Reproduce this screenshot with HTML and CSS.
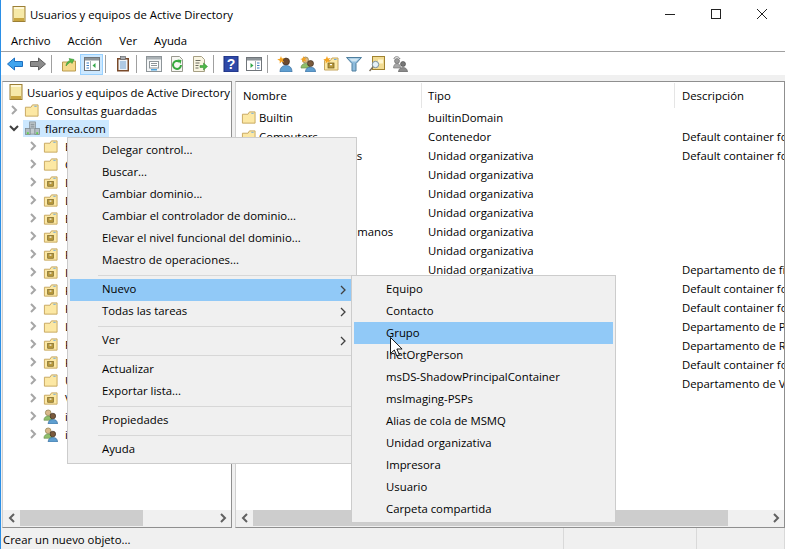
FILE: index.html
```html
<!DOCTYPE html>
<html lang="es">
<head>
    <meta charset="UTF-8">
    <title>Usuarios y equipos de Active Directory</title>
    <link rel="stylesheet" href="styles.css">
</head>
<body>
    <svg class="defs" width="0" height="0">
        <symbol id="mmc" viewBox="0 0 16 16">
            <rect x="2" y="0.5" width="12" height="15" fill="#f6e9a8" stroke="#9c7f35"/>
            <rect x="3" y="1" width="10" height="2" fill="#fff8d8"/>
            <rect x="3" y="12" width="10" height="3" fill="#c9a640"/>
        </symbol>
        <symbol id="folder" viewBox="0 0 16 16">
            <path d="M1.5 4.5v9.5h13.5v-12h-6l-1.5 2.5z" fill="#fce8a4" stroke="#c6a65e"/>
            <rect x="11" y="3" width="2.5" height="1" fill="#6aa8e0"/>
        </symbol>
        <symbol id="ou" viewBox="0 0 16 16">
            <path d="M1.5 4.5v9.5h13.5v-12h-6l-1.5 2.5z" fill="#fce8a4" stroke="#c6a65e"/>
            <rect x="11" y="3" width="2.5" height="1" fill="#6aa8e0"/>
            <rect x="5" y="7" width="6" height="5" fill="#b8993c" stroke="#6e5a1e" stroke-width="0.7"/>
            <rect x="7" y="8" width="2" height="1.2" fill="#fff"/>
        </symbol>
        <symbol id="people" viewBox="0 0 16 16">
            <circle cx="5.5" cy="4" r="3" fill="#d9b98c" stroke="#8a7a45" stroke-width="0.7"/>
            <path d="M1 12c0-3 2-4.500 4.500-4.500s4.500 1.500 4.500 4.500z" fill="#8fbf6a" stroke="#6b8f50" stroke-width="0.7"/>
            <circle cx="10.500" cy="7.500" r="3" fill="#7a5a3c" stroke="#3c2c1e" stroke-width="0.7"/>
            <path d="M5.500 16c0-3.500 2-4.800 5-4.800s5 1.300 5 4.800z" fill="#5f9fd0" stroke="#3f6f9c" stroke-width="0.7"/>
        </symbol>
        <symbol id="domain" viewBox="0 0 16 16">
            <rect x="5" y="1" width="6" height="13" fill="#c4ccd0" stroke="#7b868c" stroke-width="0.8"/>
            <path d="M6 3.500h4M6 5.500h4M6 7.500h4" stroke="#6d787e" stroke-width="0.8"/>
            <rect x="0.500" y="8" width="5" height="6.500" fill="#b4bec4" stroke="#7b868c" stroke-width="0.8"/>
            <rect x="10.500" y="8" width="5" height="6.500" fill="#b4bec4" stroke="#7b868c" stroke-width="0.8"/>
            <rect x="2" y="12" width="2" height="2" fill="#5ed04c"/>
            <rect x="12" y="12" width="2" height="2" fill="#5ed04c"/>
        </symbol>
        <symbol id="star" viewBox="0 0 8 8">
            <path d="M4 0l.9 2.600 2.800-.7-1.900 2.100 1.400 2.600-2.500-1.100-2 2 .1-2.800-2.600-1.300 2.700-.6z" fill="#f6a31e"/>
        </symbol>
    </svg>

    <div class="win">
        <header class="titlebar">
            <svg class="title-icon"><use href="#mmc"/></svg>
            <span class="title-text">Usuarios y equipos de Active Directory</span>
            <div class="controls">
                <svg width="12" height="12" viewBox="0 0 12 12"><path d="M1 6.500h10" stroke="#222"/></svg>
                <svg width="12" height="12" viewBox="0 0 12 12"><rect x="1.500" y="1.500" width="9" height="9" fill="none" stroke="#222"/></svg>
                <svg width="12" height="12" viewBox="0 0 12 12"><path d="M1 1l10 10M11 1l-10 10" stroke="#222"/></svg>
            </div>
        </header>

        <nav class="menubar">
            <span>Archivo</span>
            <span>Acción</span>
            <span>Ver</span>
            <span>Ayuda</span>
        </nav>

        <div class="toolbar">
            <button class="tool"><svg viewBox="0 0 16 16"><path d="M0.500 8l7-6v3.500h8v5h-8v3.500z" fill="#3fa4ee" stroke="#1d6fc0"/></svg></button>
            <button class="tool"><svg viewBox="0 0 16 16"><path d="M15.500 8l-7-6v3.500h-8v5h8v3.500z" fill="#8c8c8c" stroke="#5e5e5e"/></svg></button>
            <i class="tool-sep"></i>
            <button class="tool"><svg viewBox="0 0 16 16"><path d="M1.500 6v9h13v-10h-5l-1 1z" fill="#f5d98c" stroke="#b99a4e"/><path d="M5 10c0-3 2-5 4-5.500l-1-2 5 1-2 4-1-1.500c-2 .5-3 2-5 4z" fill="#54b948" stroke="#2f8a2a" stroke-width="0.5"/></svg></button>
            <button class="tool tool-on"><svg viewBox="0 0 16 16"><rect x="0.500" y="1.500" width="15" height="13" fill="#fff" stroke="#70757a"/><rect x="1" y="2" width="14" height="2.500" fill="#8d9499"/><path d="M6.500 5v9" stroke="#a8aeb2"/><path d="M2.500 7h2.500M2.500 9.500h2.500M2.500 12h2.500" stroke="#3d7fc4" stroke-width="1.200"/><path d="M11.500 7v5l-3-2.500z" fill="#35a84a"/></svg></button>
            <i class="tool-sep"></i>
            <button class="tool"><svg viewBox="0 0 16 16"><rect x="2" y="2" width="12" height="13.500" fill="#7a4a2a"/><rect x="3.500" y="3.500" width="9" height="10.500" fill="#eef3f8"/><path d="M5 6h6M5 8h6M5 10h6M5 12h6" stroke="#6f9fcf"/><rect x="5.500" y="0.500" width="5" height="3" fill="#a8adb2" stroke="#55585c" stroke-width="0.6"/></svg></button>
            <i class="tool-sep"></i>
            <button class="tool"><svg viewBox="0 0 16 16"><rect x="0.500" y="0.500" width="15" height="15" fill="#f4f6f7" stroke="#8e9599"/><rect x="1" y="1" width="14" height="2.500" fill="#aab1b5"/><rect x="3.500" y="5.500" width="9" height="6.500" fill="#fff" stroke="#8e9599"/><path d="M5 7.500h6M5 9.500h6" stroke="#8e9599"/><rect x="5" y="13" width="6" height="1.500" fill="#4aa3e0"/></svg></button>
            <button class="tool"><svg viewBox="0 0 16 16"><path d="M2.500 0.500h8l3 3v12h-11z" fill="#f7f7f3" stroke="#9a9a90"/><path d="M12 9a4 4 0 1 1-1.500-3.200" fill="none" stroke="#37a83e" stroke-width="2"/><path d="M8.500 3.500l4 .5-1 4z" fill="#37a83e"/></svg></button>
            <button class="tool"><svg viewBox="0 0 16 16"><path d="M1.500 0.500h8l3 3v12h-11z" fill="#f9f5e2" stroke="#a69f84"/><path d="M3.500 4.500h5M3.500 7h4M3.500 9.500h3M3.500 12h3" stroke="#6b6b60"/><path d="M8 9.500h3.500v-2.500l4 3.500-4 3.500v-2.500h-3.500z" fill="#4cb848" stroke="#2f8a2a" stroke-width="0.5"/></svg></button>
            <i class="tool-sep"></i>
            <button class="tool"><svg viewBox="0 0 16 16"><rect x="1" y="0" width="14" height="16" fill="#2f49a8"/><rect x="1" y="0" width="14" height="16" fill="none" stroke="#1b2d78"/><text x="8" y="13" class="help-mark">?</text></svg></button>
            <button class="tool"><svg viewBox="0 0 16 16"><rect x="0.500" y="1.500" width="15" height="13" fill="#fff" stroke="#70757a"/><rect x="1" y="2" width="14" height="2.500" fill="#8d9499"/><path d="M9.500 5v9" stroke="#a8aeb2"/><path d="M11 7h2.500M11 9.500h2.500M11 12h2.500" stroke="#3d7fc4" stroke-width="1.200"/><path d="M4.500 7v5l3-2.500z" fill="#35a84a"/></svg></button>
            <i class="tool-sep"></i>
            <button class="tool"><svg viewBox="0 0 16 16"><circle cx="9" cy="5.500" r="3.500" fill="#6b4a30" stroke="#33241a" stroke-width="0.6"/><path d="M3 16c0-4.500 2.500-6.500 6-6.500s6 2 6 6.500z" fill="#5f9fd0" stroke="#3f6f9c" stroke-width="0.7"/><use href="#star" width="8" height="8" x="0" y="0"/></svg></button>
            <button class="tool"><svg viewBox="0 0 16 16"><use href="#people"/><use href="#star" width="7" height="7" x="0" y="0"/></svg></button>
            <button class="tool"><svg viewBox="0 0 16 16"><use href="#ou"/><use href="#star" width="8" height="8" x="0" y="0"/></svg></button>
            <button class="tool"><svg viewBox="0 0 16 16"><path d="M0.500 1.500h15l-5.500 6v7.500h-4v-7.500z" fill="#8fbcdc" stroke="#4f7f9f"/><path d="M3 2.500h10l-3 3h-4z" fill="#d2e6f2"/></svg></button>
            <button class="tool"><svg viewBox="0 0 16 16"><rect x="3.500" y="0.500" width="12" height="13" fill="#f2dc94" stroke="#a18330"/><path d="M9 3.500h5v4h-5z" fill="#fff6d0"/><circle cx="6.500" cy="8.500" r="3.200" fill="#e6f2fa" stroke="#7b8f9c"/><path d="M4 11l-3.500 4" stroke="#7b6f5c" stroke-width="1.500"/></svg></button>
            <button class="tool"><svg viewBox="0 0 16 16"><circle cx="5" cy="5" r="2.500" fill="#9a9a9a" stroke="#666" stroke-width="0.6"/><path d="M1.500 12c0-3 1.500-4.500 3.500-4.500s3.500 1.500 3.500 4.500z" fill="#a8a8a8" stroke="#707070" stroke-width="0.6"/><circle cx="11" cy="8" r="2.500" fill="#777" stroke="#444" stroke-width="0.6"/><path d="M6.500 16c0-3 2-4.500 4.500-4.500s4.500 1.500 4.500 4.500z" fill="#8c8c8c" stroke="#5c5c5c" stroke-width="0.6"/><path d="M2 3c0-3 5-3 6 0" fill="none" stroke="#777"/></svg></button>
        </div>

        <div class="strip"></div>

        <main class="panes">
            <section class="pane pane-tree">
                <div class="pane-body tree-body">
                    <div class="tree-row tree-root"><svg class="ico"><use href="#mmc"/></svg><span>Usuarios y equipos de Active Directory</span></div>
                    <div class="tree-row lvl1"><svg class="chev" viewBox="0 0 8 10"><path d="M2 1l4 4-4 4" /></svg><svg class="ico"><use href="#folder"/></svg><span>Consultas guardadas</span></div>
                    <div class="tree-row lvl1"><svg class="chev chev-open" viewBox="0 0 10 8"><path d="M1 2l4 4 4-4" /></svg><span class="selected"><svg class="ico"><use href="#domain"/></svg><span>flarrea.com</span></span></div>
                    <div class="tree-row lvl2"><svg class="chev" viewBox="0 0 8 10"><path d="M2 1l4 4-4 4" /></svg><svg class="ico"><use href="#folder"/></svg><span>Builtin</span></div>
                    <div class="tree-row lvl2"><svg class="chev" viewBox="0 0 8 10"><path d="M2 1l4 4-4 4" /></svg><svg class="ico"><use href="#folder"/></svg><span>Computers</span></div>
                    <div class="tree-row lvl2"><svg class="chev" viewBox="0 0 8 10"><path d="M2 1l4 4-4 4" /></svg><svg class="ico"><use href="#ou"/></svg><span>Domain Controllers</span></div>
                    <div class="tree-row lvl2"><svg class="chev" viewBox="0 0 8 10"><path d="M2 1l4 4-4 4" /></svg><svg class="ico"><use href="#ou"/></svg><span>Dirección</span></div>
                    <div class="tree-row lvl2"><svg class="chev" viewBox="0 0 8 10"><path d="M2 1l4 4-4 4" /></svg><svg class="ico"><use href="#ou"/></svg><span>Equipos</span></div>
                    <div class="tree-row lvl2"><svg class="chev" viewBox="0 0 8 10"><path d="M2 1l4 4-4 4" /></svg><svg class="ico"><use href="#ou"/></svg><span>Facturación</span></div>
                    <div class="tree-row lvl2"><svg class="chev" viewBox="0 0 8 10"><path d="M2 1l4 4-4 4" /></svg><svg class="ico"><use href="#ou"/></svg><span>Recursos Humanos</span></div>
                    <div class="tree-row lvl2"><svg class="chev" viewBox="0 0 8 10"><path d="M2 1l4 4-4 4" /></svg><svg class="ico"><use href="#ou"/></svg><span>Informática</span></div>
                    <div class="tree-row lvl2"><svg class="chev" viewBox="0 0 8 10"><path d="M2 1l4 4-4 4" /></svg><svg class="ico"><use href="#ou"/></svg><span>Finanzas</span></div>
                    <div class="tree-row lvl2"><svg class="chev" viewBox="0 0 8 10"><path d="M2 1l4 4-4 4" /></svg><svg class="ico"><use href="#folder"/></svg><span>Keys</span></div>
                    <div class="tree-row lvl2"><svg class="chev" viewBox="0 0 8 10"><path d="M2 1l4 4-4 4" /></svg><svg class="ico"><use href="#folder"/></svg><span>LostAndFound</span></div>
                    <div class="tree-row lvl2"><svg class="chev" viewBox="0 0 8 10"><path d="M2 1l4 4-4 4" /></svg><svg class="ico"><use href="#ou"/></svg><span>Producción</span></div>
                    <div class="tree-row lvl2"><svg class="chev" viewBox="0 0 8 10"><path d="M2 1l4 4-4 4" /></svg><svg class="ico"><use href="#ou"/></svg><span>RRHH</span></div>
                    <div class="tree-row lvl2"><svg class="chev" viewBox="0 0 8 10"><path d="M2 1l4 4-4 4" /></svg><svg class="ico"><use href="#folder"/></svg><span>Users</span></div>
                    <div class="tree-row lvl2"><svg class="chev" viewBox="0 0 8 10"><path d="M2 1l4 4-4 4" /></svg><svg class="ico"><use href="#ou"/></svg><span>Ventas</span></div>
                    <div class="tree-row lvl2"><svg class="chev" viewBox="0 0 8 10"><path d="M2 1l4 4-4 4" /></svg><svg class="ico"><use href="#people"/></svg><span>informáticos</span></div>
                    <div class="tree-row lvl2"><svg class="chev" viewBox="0 0 8 10"><path d="M2 1l4 4-4 4" /></svg><svg class="ico"><use href="#people"/></svg><span>invitados</span></div>
                </div>
                <div class="hscroll">
                    <span class="sb-arrow"><svg viewBox="0 0 8 10"><path d="M6 1l-4 4 4 4"/></svg></span>
                    <span class="sb-thumb thumb-tree"></span>
                    <span class="sb-gap"></span>
                    <span class="sb-arrow"><svg viewBox="0 0 8 10"><path d="M2 1l4 4-4 4"/></svg></span>
                </div>
            </section>

            <section class="pane pane-list">
                <div class="pane-body">
                    <div class="list-head">
                        <span class="col-name">Nombre</span>
                        <span class="col-type">Tipo</span>
                        <span class="col-desc">Descripción</span>
                    </div>
                    <div class="list-row"><span class="col-name"><svg class="ico"><use href="#folder"/></svg>Builtin</span><span class="col-type">builtinDomain</span><span class="col-desc"></span></div>
                    <div class="list-row"><span class="col-name"><svg class="ico"><use href="#folder"/></svg>Computers</span><span class="col-type">Contenedor</span><span class="col-desc">Default container for upgraded computer accounts</span></div>
                    <div class="list-row"><span class="col-name"><svg class="ico"><use href="#ou"/></svg>Domain Controllers</span><span class="col-type">Unidad organizativa</span><span class="col-desc">Default container for domain controllers</span></div>
                    <div class="list-row"><span class="col-name"><svg class="ico"><use href="#ou"/></svg>Dirección</span><span class="col-type">Unidad organizativa</span><span class="col-desc"></span></div>
                    <div class="list-row"><span class="col-name"><svg class="ico"><use href="#ou"/></svg>Equipos</span><span class="col-type">Unidad organizativa</span><span class="col-desc"></span></div>
                    <div class="list-row"><span class="col-name"><svg class="ico"><use href="#ou"/></svg>Facturación</span><span class="col-type">Unidad organizativa</span><span class="col-desc"></span></div>
                    <div class="list-row"><span class="col-name"><svg class="ico"><use href="#ou"/></svg>Dpto. Recursos Humanos</span><span class="col-type">Unidad organizativa</span><span class="col-desc"></span></div>
                    <div class="list-row"><span class="col-name"><svg class="ico"><use href="#ou"/></svg>Informática</span><span class="col-type">Unidad organizativa</span><span class="col-desc"></span></div>
                    <div class="list-row"><span class="col-name"><svg class="ico"><use href="#ou"/></svg>Finanzas</span><span class="col-type">Unidad organizativa</span><span class="col-desc">Departamento de finanzas</span></div>
                    <div class="list-row"><span class="col-name"><svg class="ico"><use href="#folder"/></svg>Keys</span><span class="col-type">Contenedor</span><span class="col-desc">Default container for key credential objects</span></div>
                    <div class="list-row"><span class="col-name"><svg class="ico"><use href="#folder"/></svg>LostAndFound</span><span class="col-type">Contenedor</span><span class="col-desc">Default container for orphaned objects</span></div>
                    <div class="list-row"><span class="col-name"><svg class="ico"><use href="#ou"/></svg>Producción</span><span class="col-type">Unidad organizativa</span><span class="col-desc">Departamento de Producción</span></div>
                    <div class="list-row"><span class="col-name"><svg class="ico"><use href="#ou"/></svg>RRHH</span><span class="col-type">Unidad organizativa</span><span class="col-desc">Departamento de Recursos Humanos</span></div>
                    <div class="list-row"><span class="col-name"><svg class="ico"><use href="#folder"/></svg>Users</span><span class="col-type">Contenedor</span><span class="col-desc">Default container for upgraded user accounts</span></div>
                    <div class="list-row"><span class="col-name"><svg class="ico"><use href="#ou"/></svg>Ventas</span><span class="col-type">Unidad organizativa</span><span class="col-desc">Departamento de Ventas</span></div>
                </div>
                <div class="hscroll">
                    <span class="sb-arrow"><svg viewBox="0 0 8 10"><path d="M6 1l-4 4 4 4"/></svg></span>
                    <span class="sb-thumb thumb-list"></span>
                    <span class="sb-gap"></span>
                    <span class="sb-arrow"><svg viewBox="0 0 8 10"><path d="M2 1l4 4-4 4"/></svg></span>
                </div>
            </section>
        </main>

        <footer class="statusbar">
            <span class="status-main">Crear un nuevo objeto...</span>
            <span class="status-mid"></span>
            <span class="status-end"></span>
        </footer>

        <ul class="menu context-menu">
            <li>Delegar control...</li>
            <li>Buscar...</li>
            <li>Cambiar dominio...</li>
            <li>Cambiar el controlador de dominio...</li>
            <li>Elevar el nivel funcional del dominio...</li>
            <li>Maestro de operaciones...</li>
            <li class="sep"></li>
            <li class="hl has-sub">Nuevo<svg class="sub-arrow" viewBox="0 0 6 10"><path d="M1 1l4 4-4 4"/></svg></li>
            <li class="has-sub">Todas las tareas<svg class="sub-arrow" viewBox="0 0 6 10"><path d="M1 1l4 4-4 4"/></svg></li>
            <li class="sep"></li>
            <li class="has-sub">Ver<svg class="sub-arrow" viewBox="0 0 6 10"><path d="M1 1l4 4-4 4"/></svg></li>
            <li class="sep"></li>
            <li>Actualizar</li>
            <li>Exportar lista...</li>
            <li class="sep"></li>
            <li>Propiedades</li>
            <li class="sep"></li>
            <li>Ayuda</li>
        </ul>

        <ul class="menu sub-menu">
            <li>Equipo</li>
            <li>Contacto</li>
            <li class="hl">Grupo</li>
            <li>InetOrgPerson</li>
            <li>msDS-ShadowPrincipalContainer</li>
            <li>msImaging-PSPs</li>
            <li>Alias de cola de MSMQ</li>
            <li>Unidad organizativa</li>
            <li>Impresora</li>
            <li>Usuario</li>
            <li>Carpeta compartida</li>
        </ul>

        <svg class="cursor" width="13" height="20" viewBox="0 0 13 20"><path d="M0.500 0.500v16l3.800-3.500 2.500 6 2.600-1.100-2.500-5.900h5.200z" fill="#fff" stroke="#000" stroke-width="0.9"/></svg>
    </div>
</body>
</html>
```

FILE: styles.css
```css
* {
    box-sizing: border-box;
}

body {
    margin: 0;
    background-color: #fff;
    font-family: "Open Sans", "Noto Sans", sans-serif;
    font-size: 11.35px;
    color: #000;
}

.defs {
    position: absolute;
}

.win {
    position: relative;
    display: flex;
    flex-direction: column;
    width: 785px;
    height: 549px;
    overflow: hidden;
    border-left: 1px solid #2b8fe6;
    background-color: #fff;
}

/* title bar */
.titlebar {
    display: flex;
    align-items: center;
    height: 30px;
    padding-left: 10px;
    padding-bottom: 2px;
}

.title-icon {
    width: 16px;
    height: 16px;
    margin-right: 3px;
}

.title-text {
    flex: 1;
}

.controls {
    display: flex;
    gap: 34px;
    margin-right: 17px;
}

/* menu */
.menubar {
    display: flex;
    align-items: center;
    gap: 17px;
    height: 22px;
    padding-left: 10px;
    border-bottom: 1px solid #a0a0a0;
}

/* toolbar */
.toolbar {
    display: flex;
    align-items: center;
    height: 23px;
    padding-left: 2px;
    padding-top: 1px;
}

.tool {
    display: flex;
    align-items: center;
    justify-content: center;
    width: 23px;
    height: 21px;
    padding: 0;
    border: 1px solid transparent;
    background: none;
}

.tool svg {
    width: 16px;
    height: 16px;
}

.tool-on {
    background-color: #cce8ff;
    border-color: #99d1ff;
}

.help-mark {
    font-family: "Liberation Sans", sans-serif;
    font-size: 14px;
    font-weight: bold;
    fill: #fff;
    text-anchor: middle;
}

.tool-sep {
    width: 1px;
    height: 18px;
    margin: 0 5px 0 2px;
    background-color: #a0a0a0;
}

.strip {
    height: 6px;
    background-color: #f0f0f0;
}

/* panes */
.panes {
    flex: 1;
    display: flex;
    gap: 3px;
    min-height: 0;
    padding-left: 1px;
    background-color: #f0f0f0;
}

.pane {
    display: flex;
    flex-direction: column;
    min-width: 0;
    border: 1px solid #8f8f8f;
    border-left-color: #d0d0d0;
    background-color: #fff;
}

.pane-tree {
    width: 230px;
}

.pane-list {
    flex: 1;
}

.pane-body {
    flex: 1;
    min-height: 0;
    overflow: hidden;
}

.tree-body {
    padding-top: 1px;
}

.hscroll {
    display: flex;
    flex-shrink: 0;
    height: 17px;
    padding-bottom: 1px;
    background-color: #f0f0f0;
}

.sb-arrow {
    display: flex;
    align-items: center;
    justify-content: center;
    width: 17px;
}

.sb-arrow svg {
    width: 8px;
    height: 10px;
    fill: none;
    stroke: #606060;
    stroke-width: 2;
}

.sb-thumb {
    background-color: #cdcdcd;
}

.thumb-tree {
    width: 123px;
}

.thumb-list {
    width: 475px;
}

.sb-gap {
    flex: 1;
}

/* tree */
.tree-row {
    display: flex;
    align-items: center;
    height: 18px;
    white-space: nowrap;
}

.ico {
    flex-shrink: 0;
    width: 15px;
    height: 15px;
}

.tree-root {
    padding-left: 5px;
}

.tree-root .ico {
    width: 16px;
    height: 16px;
    margin-right: 3px;
}

.chev {
    flex-shrink: 0;
    width: 8px;
    height: 10px;
    fill: none;
    stroke: #a6a6a6;
    stroke-width: 2;
}

.chev-open {
    width: 10px;
    height: 8px;
    margin-left: -1px;
    margin-right: -1px;
    stroke: #404040;
}

.lvl1 {
    padding-left: 7px;
}

.lvl1 > .ico {
    margin-left: 6px;
    margin-right: 7px;
}

.lvl2 {
    padding-left: 26px;
}

.lvl2 > .ico {
    margin-left: 6px;
    margin-right: 7px;
}

.selected {
    display: flex;
    align-items: center;
    height: 17px;
    margin-left: 5px;
    padding-left: 2px;
    padding-right: 3px;
    background-color: #cce8ff;
}

.selected .ico {
    margin-right: 5px;
}

.selected span {
    padding-top: 1px;
}

/* list */
.list-head,
.list-row {
    display: grid;
    grid-template-columns: 186px 253px 1fr;
    white-space: nowrap;
}

.list-head {
    align-items: center;
    height: 26px;
}

.list-head .col-name {
    padding-left: 7px;
}

.list-head span {
    height: 25px;
    line-height: 25px;
    border-right: 1px solid #e5e5e5;
    padding-left: 6px;
}

.list-head .col-desc {
    padding-left: 7px;
    border-right: none;
}

.list-row {
    align-items: center;
    height: 19px;
}

.col-name {
    display: flex;
    align-items: center;
    min-width: 0;
}

.list-row .col-name {
    padding-left: 5px;
}

.list-row .col-name .ico {
    margin-right: 3px;
}

.list-row .col-type {
    padding-left: 6px;
}

.list-row .col-desc {
    padding-left: 7px;
    overflow: hidden;
}

/* status bar */
.statusbar {
    display: flex;
    flex-shrink: 0;
    height: 21px;
    background-color: #f0f0f0;
}

.statusbar span {
    line-height: 24px;
    border-right: 1px solid #d9d9d9;
}

.status-main {
    width: 563px;
    padding-left: 2px;
}

.status-mid {
    width: 133px;
}

.status-end {
    flex: 1;
}

/* context menus */
.menu {
    position: absolute;
    margin: 0;
    padding: 2px;
    list-style: none;
    background-color: #f0f0f0;
    border: 1px solid #cccccc;
    white-space: nowrap;
}

.menu li {
    position: relative;
    height: 22px;
    line-height: 20px;
}

.menu li.hl {
    background-color: #91c9f7;
}

.menu li.sep {
    height: 7px;
    margin-left: 28px;
    background: linear-gradient(#d7d7d7, #d7d7d7) 0 3px / 100% 1px no-repeat;
}

.context-menu {
    left: 66px;
    top: 137px;
    width: 290px;
}

.context-menu li {
    padding-left: 32px;
}

.sub-arrow {
    position: absolute;
    right: 8px;
    top: 6px;
    width: 6px;
    height: 10px;
    fill: none;
    stroke: #404040;
    stroke-width: 1.3;
}

.sub-menu {
    left: 350px;
    top: 275px;
    width: 265px;
}

.sub-menu li {
    padding-left: 32px;
    line-height: 22px;
}

.cursor {
    position: absolute;
    left: 389px;
    top: 337px;
}
```
